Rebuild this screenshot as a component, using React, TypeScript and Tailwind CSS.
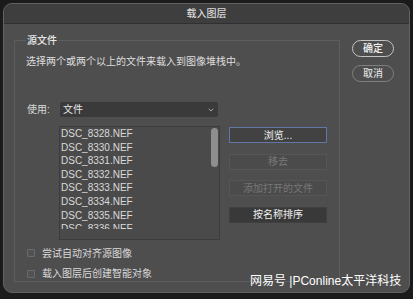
import React from 'react';
import { ChevronDown } from 'lucide-react';

const files = [
  'DSC_8328.NEF',
  'DSC_8330.NEF',
  'DSC_8331.NEF',
  'DSC_8332.NEF',
  'DSC_8333.NEF',
  'DSC_8334.NEF',
  'DSC_8335.NEF',
  'DSC_8336.NEF',
];

const cjk = "font-['Liberation_Sans','Noto_Sans_CJK_SC',sans-serif]";

const App: React.FC = () => {
  return (
    <div className={`relative w-[413px] h-[299px] bg-[#1b1b1b] pt-[3px] px-[3px] ${cjk}`}>
      {/* Dialog window */}
      <div className="w-[407px] h-[290px] rounded-[9px] border border-[#626262] bg-[#4e4e4e] overflow-hidden flex flex-col">
        {/* Title bar */}
        <div className="h-[20px] shrink-0 bg-[#3e3e3e] border-b border-[#303030] flex items-center justify-center text-[10px] font-medium text-[#dadada]">
          载入图层
        </div>

        <div className="flex pl-[10px] pt-[16px]">
          {/* Source files group */}
          <div className="w-[326px] h-[242px] border border-[#5e5e5e] flex flex-col">
            <div className="-mt-[6px] ml-[11px] w-fit px-[1px] bg-[#4e4e4e] text-[10px] font-medium leading-[12px] text-[#e8e8e8]">
              源文件
            </div>
            <p className="mt-[8px] ml-[11px] text-[10px] leading-[14px] text-[#dedede]">
              选择两个或两个以上的文件来载入到图像堆栈中。
            </p>

            <div className="flex mt-[33px] ml-[11px]">
              {/* Left: source + list */}
              <div className="flex flex-col w-[194px]">
                <div className="flex items-center h-[15px]">
                  <span className="w-[34px] text-[10px] text-[#dadada] pl-[1px]">使用:</span>
                  <div className="w-[158px] h-[15px] bg-[#3a3a3a] rounded-[2px] flex items-center justify-between pl-[3px] pr-[3px] text-[10px] text-[#e8e8e8]">
                    <span>文件</span>
                    <ChevronDown size={8} strokeWidth={2.5} className="text-[#bdbdbd]" />
                  </div>
                </div>

                <div className="mt-[9px] ml-[33px] w-[161px] h-[114px] border border-[#3c3c3c] bg-[#4a4a4a] flex">
                  <div className="flex-1 h-[102px] overflow-hidden pl-[1px] text-[10px] leading-[13.6px] text-[#dadada]">
                    {files.map(f => (
                      <div key={f}>{f}</div>
                    ))}
                  </div>
                  <div className="w-[10px] pt-[1px] flex justify-center">
                    <div className="w-[7px] h-[39px] rounded-full bg-[#8e8e8e]" />
                  </div>
                </div>
              </div>

              {/* Right: action buttons */}
              <div className="ml-[9px] pt-[25px] flex flex-col gap-[10.5px] text-[10px]">
                <button className="w-[98px] h-[16px] bg-[#424242] border border-[#6277a8] text-[#f2f2f2] flex items-center justify-center">
                  浏览...
                </button>
                <button className="w-[98px] h-[16px] bg-[#4b4b4b] border border-[#565656] text-[#777777] flex items-center justify-center">
                  移去
                </button>
                <button className="w-[98px] h-[16px] bg-[#4b4b4b] border border-[#565656] text-[#777777] flex items-center justify-center">
                  添加打开的文件
                </button>
                <button className="w-[98px] h-[16px] bg-[#393939] border border-[#404040] text-[#f0f0f0] flex items-center justify-center">
                  按名称排序
                </button>
              </div>
            </div>

            {/* Options */}
            <div className="mt-[6px] ml-[12px] flex flex-col gap-[6.5px] text-[10px] text-[#dadada]">
              <label className="flex items-center h-[14px]">
                <span className="w-[8px] h-[8px] border border-[#6a6a6a] bg-[#525252] rounded-[1px]" />
                <span className="ml-[7px]">尝试自动对齐源图像</span>
              </label>
              <label className="flex items-center h-[14px]">
                <span className="w-[8px] h-[8px] border border-[#6a6a6a] bg-[#525252] rounded-[1px]" />
                <span className="ml-[7px]">载入图层后创建智能对象</span>
              </label>
            </div>
          </div>

          {/* OK / Cancel */}
          <div className="ml-[12px] flex flex-col gap-[8px] text-[10px] font-medium">
            <button className="w-[42px] h-[17px] rounded-full border border-[#c4c4c4] text-[#f2f2f2] flex items-center justify-center">
              确定
            </button>
            <button className="w-[42px] h-[17px] rounded-full border border-[#808080] text-[#dddddd] flex items-center justify-center">
              取消
            </button>
          </div>
        </div>
      </div>

      {/* Watermark overlay */}
      <div className="absolute left-[250px] top-[273px] text-[12px] leading-[16px] text-white whitespace-nowrap">
        网易号 |PConline太平洋科技
      </div>
    </div>
  );
};

export default App;
